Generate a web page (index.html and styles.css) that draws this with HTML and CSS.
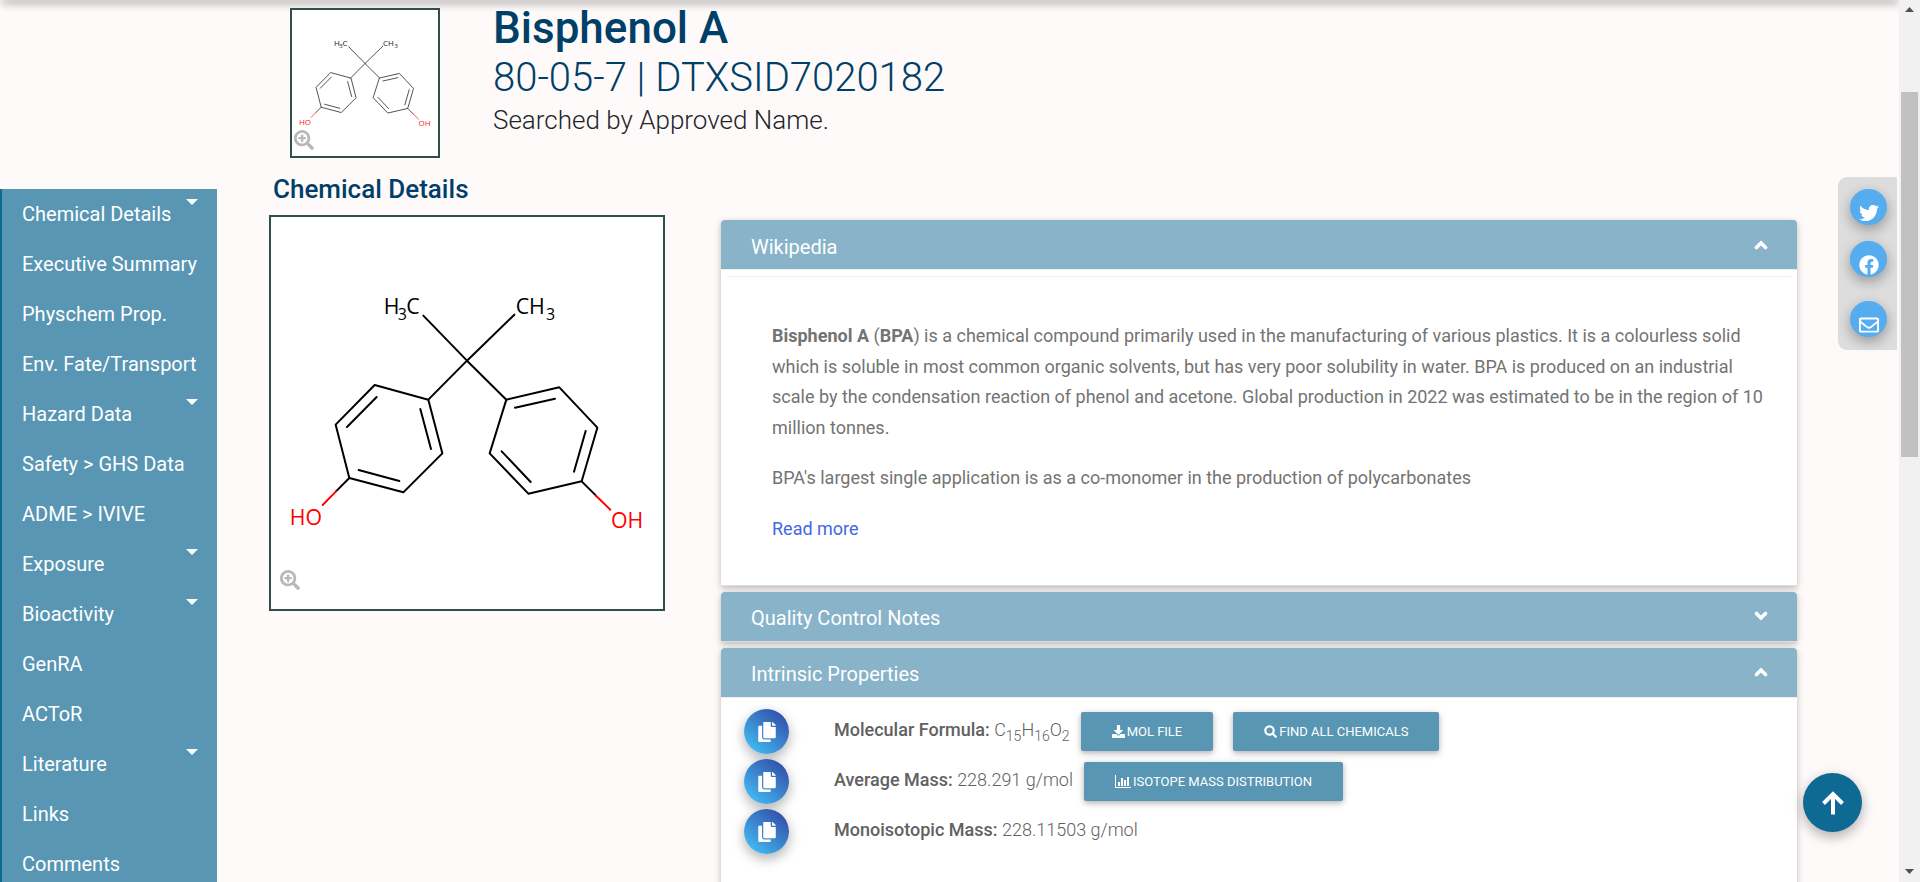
FILE: index.html
```html
<!DOCTYPE html>
<html lang="en">
<head>
<meta charset="utf-8">
<meta name="viewport" content="width=device-width, initial-scale=1">
<title>Bisphenol A - Chemical Details</title>
<link rel="stylesheet" href="styles.css">
</head>
<body>
<svg class="defs" aria-hidden="true">
  <symbol id="bonds" viewBox="33 21 1176 1176">
    <g fill="none" stroke="#000" stroke-width="6" stroke-linecap="round" stroke-linejoin="round">
      <path d="M490 317L621 452L763 314M621 452L505 569M621 452L739 569"/>
      <path d="M505 569L344 525L227 644L268 804L430 847L547 730Z"/>
      <path d="M481 597L513 717M350 561L261 651M296 780L418 813"/>
      <path d="M739 569L898 532L1012 653L965 814L805 851L689 730Z"/>
      <path d="M765 593L885 566M977 663L942 785M812 816L725 724"/>
      <path d="M268 804L228 844M965 814L1008 857"/>
      <path stroke="#f00" d="M228 844L188 885M1008 857L1051 899"/>
    </g>
  </symbol>
  <symbol id="zoom-in" viewBox="0 0 512 512"><path d="M304 192v32c0 6.600-5.400 12-12 12h-56v56c0 6.600-5.400 12-12 12h-32c-6.600 0-12-5.400-12-12v-56h-56c-6.600 0-12-5.400-12-12v-32c0-6.600 5.400-12 12-12h56v-56c0-6.600 5.400-12 12-12h32c6.600 0 12 5.400 12 12v56h56c6.600 0 12 5.400 12 12zm201 284.700L476.700 505c-9.400 9.400-24.600 9.400-33.900 0L343 405.300c-4.500-4.500-7-10.600-7-17V372c-35.300 27.600-79.700 44-128 44C93.100 416 0 322.900 0 208S93.100 0 208 0s208 93.100 208 208c0 48.300-16.400 92.700-44 128h16.300c6.400 0 12.500 2.500 17 7l99.700 99.700c9.300 9.400 9.300 24.600 0 34zM344 208c0-75.200-60.800-136-136-136S72 132.800 72 208s60.800 136 136 136 136-60.800 136-136z"/></symbol>
  <symbol id="copy" viewBox="0 0 448 512"><path d="M320 448v40c0 13.255-10.745 24-24 24H24c-13.255 0-24-10.745-24-24V120c0-13.255 10.745-24 24-24h72v296c0 30.879 25.121 56 56 56h168zm0-344V0H152c-13.255 0-24 10.745-24 24v368c0 13.255 10.745 24 24 24h272c13.255 0 24-10.745 24-24V128H344c-13.200 0-24-10.800-24-24zm120.971-31.029L375.029 7.029A24 24 0 0 0 358.059 0H352v96h96v-6.059a24 24 0 0 0-7.029-16.970z"/></symbol>
  <symbol id="chevron-up" viewBox="0 0 14 10"><path d="M2.500 7.500L7 3L11.500 7.500" fill="none" stroke="#fff" stroke-width="3.600" stroke-linecap="round"/></symbol>
  <symbol id="chevron-down" viewBox="0 0 14 10"><path d="M2.500 2.500L7 7L11.500 2.500" fill="none" stroke="#fff" stroke-width="3.600" stroke-linecap="round"/></symbol>
</svg>

<div class="page">
  <header class="topbar"></header>
  <nav class="sidebar" aria-label="Sections">
    <a class="side-link has-menu" href="#details">Chemical Details</a>
    <a class="side-link" href="#summary">Executive Summary</a>
    <a class="side-link" href="#physchem">Physchem Prop.</a>
    <a class="side-link" href="#fate">Env. Fate/Transport</a>
    <a class="side-link has-menu" href="#hazard">Hazard Data</a>
    <a class="side-link" href="#safety">Safety &gt; GHS Data</a>
    <a class="side-link" href="#adme">ADME &gt; IVIVE</a>
    <a class="side-link has-menu" href="#exposure">Exposure</a>
    <a class="side-link has-menu" href="#bioactivity">Bioactivity</a>
    <a class="side-link" href="#genra">GenRA</a>
    <a class="side-link" href="#actor">ACToR</a>
    <a class="side-link has-menu" href="#literature">Literature</a>
    <a class="side-link" href="#links">Links</a>
    <a class="side-link" href="#comments">Comments</a>
  </nav>

  <main class="content">
    <section class="intro">
      <div class="structure structure-small">
        <svg class="drawing" viewBox="33 21 1176 1176" role="img" aria-label="Structure of Bisphenol A">
          <use href="#bonds" x="33" y="21" width="1176" height="1176"/>
          <text class="atom" x="371" y="311">H<tspan class="count" x="413" y="331">3</tspan><tspan x="439" y="311">C</tspan></text>
          <text class="atom" x="767" y="311">CH<tspan class="count" x="858" y="331">3</tspan></text>
          <text class="atom oxygen" x="89" y="945">HO</text>
          <text class="atom oxygen" x="1053" y="953">OH</text>
        </svg>
        <button class="zoom" type="button" aria-label="Enlarge structure"><svg><use href="#zoom-in"/></svg></button>
      </div>
      <div class="titles">
        <h1 class="name">Bisphenol A</h1>
        <p class="ids">80-05-7 | DTXSID7020182</p>
        <p class="searched">Searched by Approved Name.</p>
      </div>
    </section>

    <h2 class="section-title" id="details">Chemical Details</h2>
    <div class="columns">
      <div class="structure structure-large">
        <svg class="drawing" viewBox="33 21 1176 1176" role="img" aria-label="Structure of Bisphenol A, large">
          <use href="#bonds" x="33" y="21" width="1176" height="1176"/>
          <text class="atom" x="371" y="311">H<tspan class="count" x="413" y="331">3</tspan><tspan x="439" y="311">C</tspan></text>
          <text class="atom" x="767" y="311">CH<tspan class="count" x="858" y="331">3</tspan></text>
          <text class="atom oxygen" x="89" y="945">HO</text>
          <text class="atom oxygen" x="1053" y="953">OH</text>
        </svg>
        <button class="zoom" type="button" aria-label="Enlarge large structure"><svg><use href="#zoom-in"/></svg></button>
      </div>

      <div class="accordion">
        <section class="card">
          <button class="card-head" type="button" aria-expanded="true">Wikipedia<svg class="chevron"><use href="#chevron-up"/></svg></button>
          <div class="card-body wiki">
            <hr class="rule">
            <div class="wiki-text">
              <p><strong>Bisphenol A</strong> (<strong>BPA</strong>) is a chemical compound primarily used in the manufacturing of various plastics. It is a colourless solid which is soluble in most common organic solvents, but has very poor solubility in water. BPA is produced on an industrial scale by the condensation reaction of phenol and acetone. Global production in 2022 was estimated to be in the region of 10 million tonnes.</p>
              <p>BPA's largest single application is as a co-monomer in the production of polycarbonates</p>
              <p><a class="more" href="#wikipedia">Read more</a></p>
            </div>
          </div>
        </section>

        <section class="card">
          <button class="card-head" type="button" aria-expanded="false">Quality Control Notes<svg class="chevron"><use href="#chevron-down"/></svg></button>
        </section>

        <section class="card">
          <button class="card-head" type="button" aria-expanded="true">Intrinsic Properties<svg class="chevron"><use href="#chevron-up"/></svg></button>
          <div class="card-body props">
            <div class="prop">
              <button class="copy" type="button" aria-label="Copy molecular formula"><svg><use href="#copy"/></svg></button>
              <p class="value"><strong>Molecular Formula:</strong> C<sub>15</sub>H<sub>16</sub>O<sub>2</sub></p>
              <button class="action" type="button"><svg width="13" height="13" viewBox="0 0 512 512" fill="#fff"><path d="M216 0h80c13 0 24 11 24 24v168h88c18 0 27 21 14 34L270 378c-8 8-20 8-28 0L90 226c-12-13-3-34 14-34h88V24c0-13 11-24 24-24zm296 376v112c0 13-11 24-24 24H24c-13 0-24-11-24-24V376c0-13 11-24 24-24h147l49 49c20 20 52 20 72 0l49-49h147c13 0 24 11 24 24z"/></svg>MOL File</button>
              <button class="action action-second" type="button"><svg width="13" height="13" viewBox="0 0 13 13" fill="none" stroke="#fff" stroke-width="2.200" stroke-linecap="round"><circle cx="5.500" cy="5.500" r="4.200"/><path d="M8.800 8.800L11.800 11.800"/></svg>Find all chemicals</button>
            </div>
            <div class="prop">
              <button class="copy" type="button" aria-label="Copy average mass"><svg><use href="#copy"/></svg></button>
              <p class="value"><strong>Average Mass:</strong> 228.291 g/mol</p>
              <button class="action" type="button"><svg width="16" height="13" viewBox="0 0 16 13" fill="#fff"><path d="M0 0h1v12h15v1H0zM3 7h2v4H3zM6 3h2v8H6zM9 5h2v6H9zM12 2h2v9h-2z"/></svg>Isotope Mass Distribution</button>
            </div>
            <div class="prop">
              <button class="copy" type="button" aria-label="Copy monoisotopic mass"><svg><use href="#copy"/></svg></button>
              <p class="value"><strong>Monoisotopic Mass:</strong> 228.11503 g/mol</p>
            </div>
          </div>
        </section>
      </div>
    </div>
  </main>

  <div class="social">
    <a class="share" href="#twitter" aria-label="Share on Twitter"><svg viewBox="0 0 512 512"><path d="M459.370 151.716c.325 4.548.325 9.097.325 13.645 0 138.720-105.583 298.558-298.558 298.558-59.452 0-114.680-17.219-161.137-47.106 8.447.974 16.568 1.299 25.340 1.299 49.055 0 94.213-16.568 130.274-44.832-46.132-.975-84.792-31.188-98.112-72.772 6.498.974 12.995 1.624 19.818 1.624 9.421 0 18.843-1.300 27.614-3.573-48.081-9.747-84.143-51.980-84.143-102.985v-1.299c13.969 7.797 30.214 12.670 47.431 13.319-28.264-18.843-46.781-51.005-46.781-87.391 0-19.492 5.197-37.360 14.294-52.954 51.655 63.675 129.300 105.258 216.365 109.807-1.624-7.797-2.599-15.918-2.599-24.040 0-57.828 46.782-104.934 104.934-104.934 30.213 0 57.502 12.670 76.670 33.137 23.715-4.548 46.456-13.320 66.599-25.340-7.798 24.366-24.366 44.833-46.132 57.827 21.117-2.273 41.584-8.122 60.426-16.243-14.292 20.791-32.161 39.308-52.628 54.253z"/></svg></a>
    <a class="share" href="#facebook" aria-label="Share on Facebook"><svg viewBox="0 0 512 512"><path d="M504 256C504 119 393 8 256 8S8 119 8 256c0 123.780 90.690 226.380 209.250 245V327.690h-63V256h63v-54.640c0-62.150 37-96.480 93.670-96.480 27.140 0 55.520 4.840 55.520 4.840v61h-31.280c-30.800 0-40.410 19.120-40.410 38.730V256h68.780l-11 71.690h-57.780V501C413.310 482.380 504 379.780 504 256z"/></svg></a>
    <a class="share share-mail" href="#email" aria-label="Share by email"><svg viewBox="0 0 512 512"><path d="M464 64H48C21.490 64 0 85.490 0 112v288c0 26.510 21.490 48 48 48h416c26.510 0 48-21.490 48-48V112c0-26.510-21.490-48-48-48zm0 48v40.805c-22.422 18.259-58.168 46.651-134.587 106.490-16.841 13.247-50.201 45.072-73.413 44.701-23.208.375-56.579-31.459-73.413-44.701C106.180 199.465 70.425 171.067 48 152.805V112h416zM48 400V214.398c22.914 18.251 55.409 43.862 104.938 82.646 21.857 17.205 60.134 55.186 103.062 54.955 42.717.231 80.509-37.199 103.053-54.947 49.528-38.783 82.032-64.401 104.947-82.653V400H48z"/></svg></a>
  </div>

  <button class="to-top" type="button" aria-label="Back to top"><svg width="24" height="26" viewBox="0 0 24 26" fill="none" stroke="#fff" stroke-width="4"><path d="M12 24.500V5M2.500 13.500L12 4L21.500 13.500"/></svg></button>
</div>

<div class="scrollbar" aria-hidden="true">
  <svg width="21" height="18" viewBox="0 0 21 18"><path d="M6 12L10.500 7L15 12Z" fill="#505050"/></svg>
  <div class="track"><div class="thumb"></div></div>
  <svg width="21" height="18" viewBox="0 0 21 18"><path d="M6 5L10.500 10L15 5Z" fill="#505050"/></svg>
</div>
</body>
</html>
```
FILE: styles.css
```css
* { box-sizing: border-box; }

body {
  margin: 0;
  display: flex;
  height: 100vh;
  overflow: hidden;
  background: #fffafa;
  color: #212529;
  font-family: Roboto, "Open Sans", sans-serif;
  font-size: 18px;
}

h1, h2, p { margin: 0; }
button { font-family: inherit; border: 0; margin: 0; padding: 0; cursor: pointer; }
a { text-decoration: none; }
svg { display: block; flex: none; }
.defs { position: absolute; width: 0; height: 0; }

.page {
  position: relative;
  flex: 1;
  min-width: 0;
  display: grid;
  grid-template-columns: 217px 1fr;
  grid-template-rows: 0 1fr;
  overflow: hidden;
}

.topbar {
  grid-column: 1 / -1;
  height: 0;
  margin: 0 2px 0 4px;
  box-shadow: 0 1px 9px 2px rgba(0, 0, 0, 0.45);
}

/* Side navigation */
.sidebar {
  margin-top: 189px;
  background: #5896b3;
  border-left: 2px solid #0e6993;
  overflow: hidden;
}
.side-link {
  display: flex;
  justify-content: space-between;
  height: 50px;
  padding: 10px 19px 0 20px;
  color: #fff;
  font-size: 20px;
  line-height: 30px;
  white-space: nowrap;
}
.has-menu::after {
  content: "";
  width: 12px;
  height: 6px;
  background: #fff;
  clip-path: polygon(0 0, 100% 0, 50% 100%);
}

/* Heading area */
.content { padding: 8px 102px 0 52px; min-width: 0; }
.intro { display: flex; gap: 53px; padding-left: 21px; }
.name { margin-top: -7px; color: #003f67; font-size: 44px; font-weight: 500; line-height: 54px; }
.ids { color: #003f67; font-size: 40px; font-weight: 300; line-height: 46px; }
.searched { font-size: 26px; font-weight: 300; line-height: 38px; }
.section-title {
  margin: 15px 0 9px 4px;
  color: #003f67;
  font-size: 26px;
  font-weight: 500;
  line-height: 33px;
}

.structure { position: relative; flex: none; background: #fff; border: 2px solid #2f4f4f; }
.structure-small { width: 150px; height: 150px; }
.structure-large { width: 396px; height: 396px; }
.drawing { width: 100%; height: 100%; }
.atom { font-family: "Open Sans", "Noto Sans", sans-serif; font-size: 64px; }
.count { font-size: 48px; }
.oxygen { fill: #f00; }
.structure-small .drawing { opacity: 0.9; }
.zoom { position: absolute; background: none; }
.zoom svg { width: 20px; height: 20px; fill: #b8b8b8; }
.structure-small .zoom { left: 2px; bottom: 6px; }
.structure-large .zoom { left: 9px; bottom: 19px; }

/* Accordion */
.columns { display: flex; align-items: flex-start; gap: 56px; }
.accordion { flex: 1; min-width: 0; display: flex; flex-direction: column; gap: 6px; padding-top: 5px; }
.card {
  background: #fff;
  border-bottom: 1px solid #dfdfdf;
  border-radius: 4px 4px 0 0;
  box-shadow: 0 2px 5px rgba(0, 0, 0, 0.16), 0 2px 10px rgba(0, 0, 0, 0.12);
}
.card-head {
  display: flex;
  justify-content: space-between;
  align-items: center;
  width: 100%;
  height: 49px;
  padding: 4px 29px 0 30px;
  background: #88b3c9;
  border-radius: 4px 4px 0 0;
  color: #fff;
  font-size: 20px;
  text-align: left;
}
.chevron { width: 14px; height: 10px; margin-bottom: 4px; }
.card-body { color: #747373; border-top: 1px solid #eee; }
.rule { height: 1px; margin: 6px 6px 0; border: 0; background: #eee; }
.wiki-text { padding: 44px 32px 40px 51px; line-height: 1.7; }
.wiki-text p { margin-bottom: 20px; }
.wiki-text p:last-child { margin-bottom: 0; }
.more { color: #4169e1; }
strong { font-weight: 500; }
.wiki-text strong { font-weight: 700; }

.props { padding: 9px 23px 120px; }
.prop { display: flex; align-items: center; height: 50px; font-weight: 300; color: #616161; }
.copy {
  display: grid;
  place-items: center;
  flex: none;
  width: 45px;
  height: 45px;
  margin-right: 45px;
  border-radius: 50%;
  background: linear-gradient(40deg, #45cafc, #303f9f);
  box-shadow: 0 5px 11px rgba(0, 0, 0, 0.18), 0 4px 15px rgba(0, 0, 0, 0.15);
}
.copy svg { width: 18px; height: 20px; fill: #fff; }
.value { padding-bottom: 4px; line-height: 24px; white-space: nowrap; }
.value sub { font-size: 14px; line-height: 0; }
.action {
  display: flex;
  align-items: center;
  gap: 2px;
  height: 39px;
  margin-left: 11px;
  padding: 0 31px;
  background: #5896b3;
  border-radius: 2px;
  box-shadow: 0 2px 5px rgba(0, 0, 0, 0.2), 0 2px 10px rgba(0, 0, 0, 0.14);
  color: #fff;
  font-size: 13px;
  text-transform: uppercase;
  white-space: nowrap;
}
.action-second { margin-left: 20px; }

/* Floating controls */
.social {
  position: absolute;
  top: 177px;
  right: 2px;
  display: flex;
  flex-direction: column;
  gap: 16px;
  padding: 12px 10px 13px 12px;
  background: #ddd;
  border-radius: 9px 0 0 9px;
}
.share {
  display: grid;
  place-items: center;
  width: 37px;
  height: 36px;
  padding-top: 12px;
  border-radius: 50%;
  background: #55acee;
  box-shadow: 0 5px 11px rgba(0, 0, 0, 0.18), 0 4px 15px rgba(0, 0, 0, 0.15);
}
.share svg { width: 20px; height: 20px; fill: #fff; }
.share-mail { margin-top: 8px; }
.to-top {
  position: absolute;
  right: 37px;
  bottom: 50px;
  display: grid;
  place-items: center;
  width: 59px;
  height: 59px;
  border-radius: 50%;
  background: #0e6993;
  box-shadow: 0 5px 11px rgba(0, 0, 0, 0.18), 0 4px 15px rgba(0, 0, 0, 0.15);
}

/* Scroll track */
.scrollbar { display: flex; flex-direction: column; flex: none; width: 21px; background: #f1f1f1; }
.track { flex: 1; padding: 74px 2px 0; }
.thumb { height: 365px; background: #c1c1c1; }
```
